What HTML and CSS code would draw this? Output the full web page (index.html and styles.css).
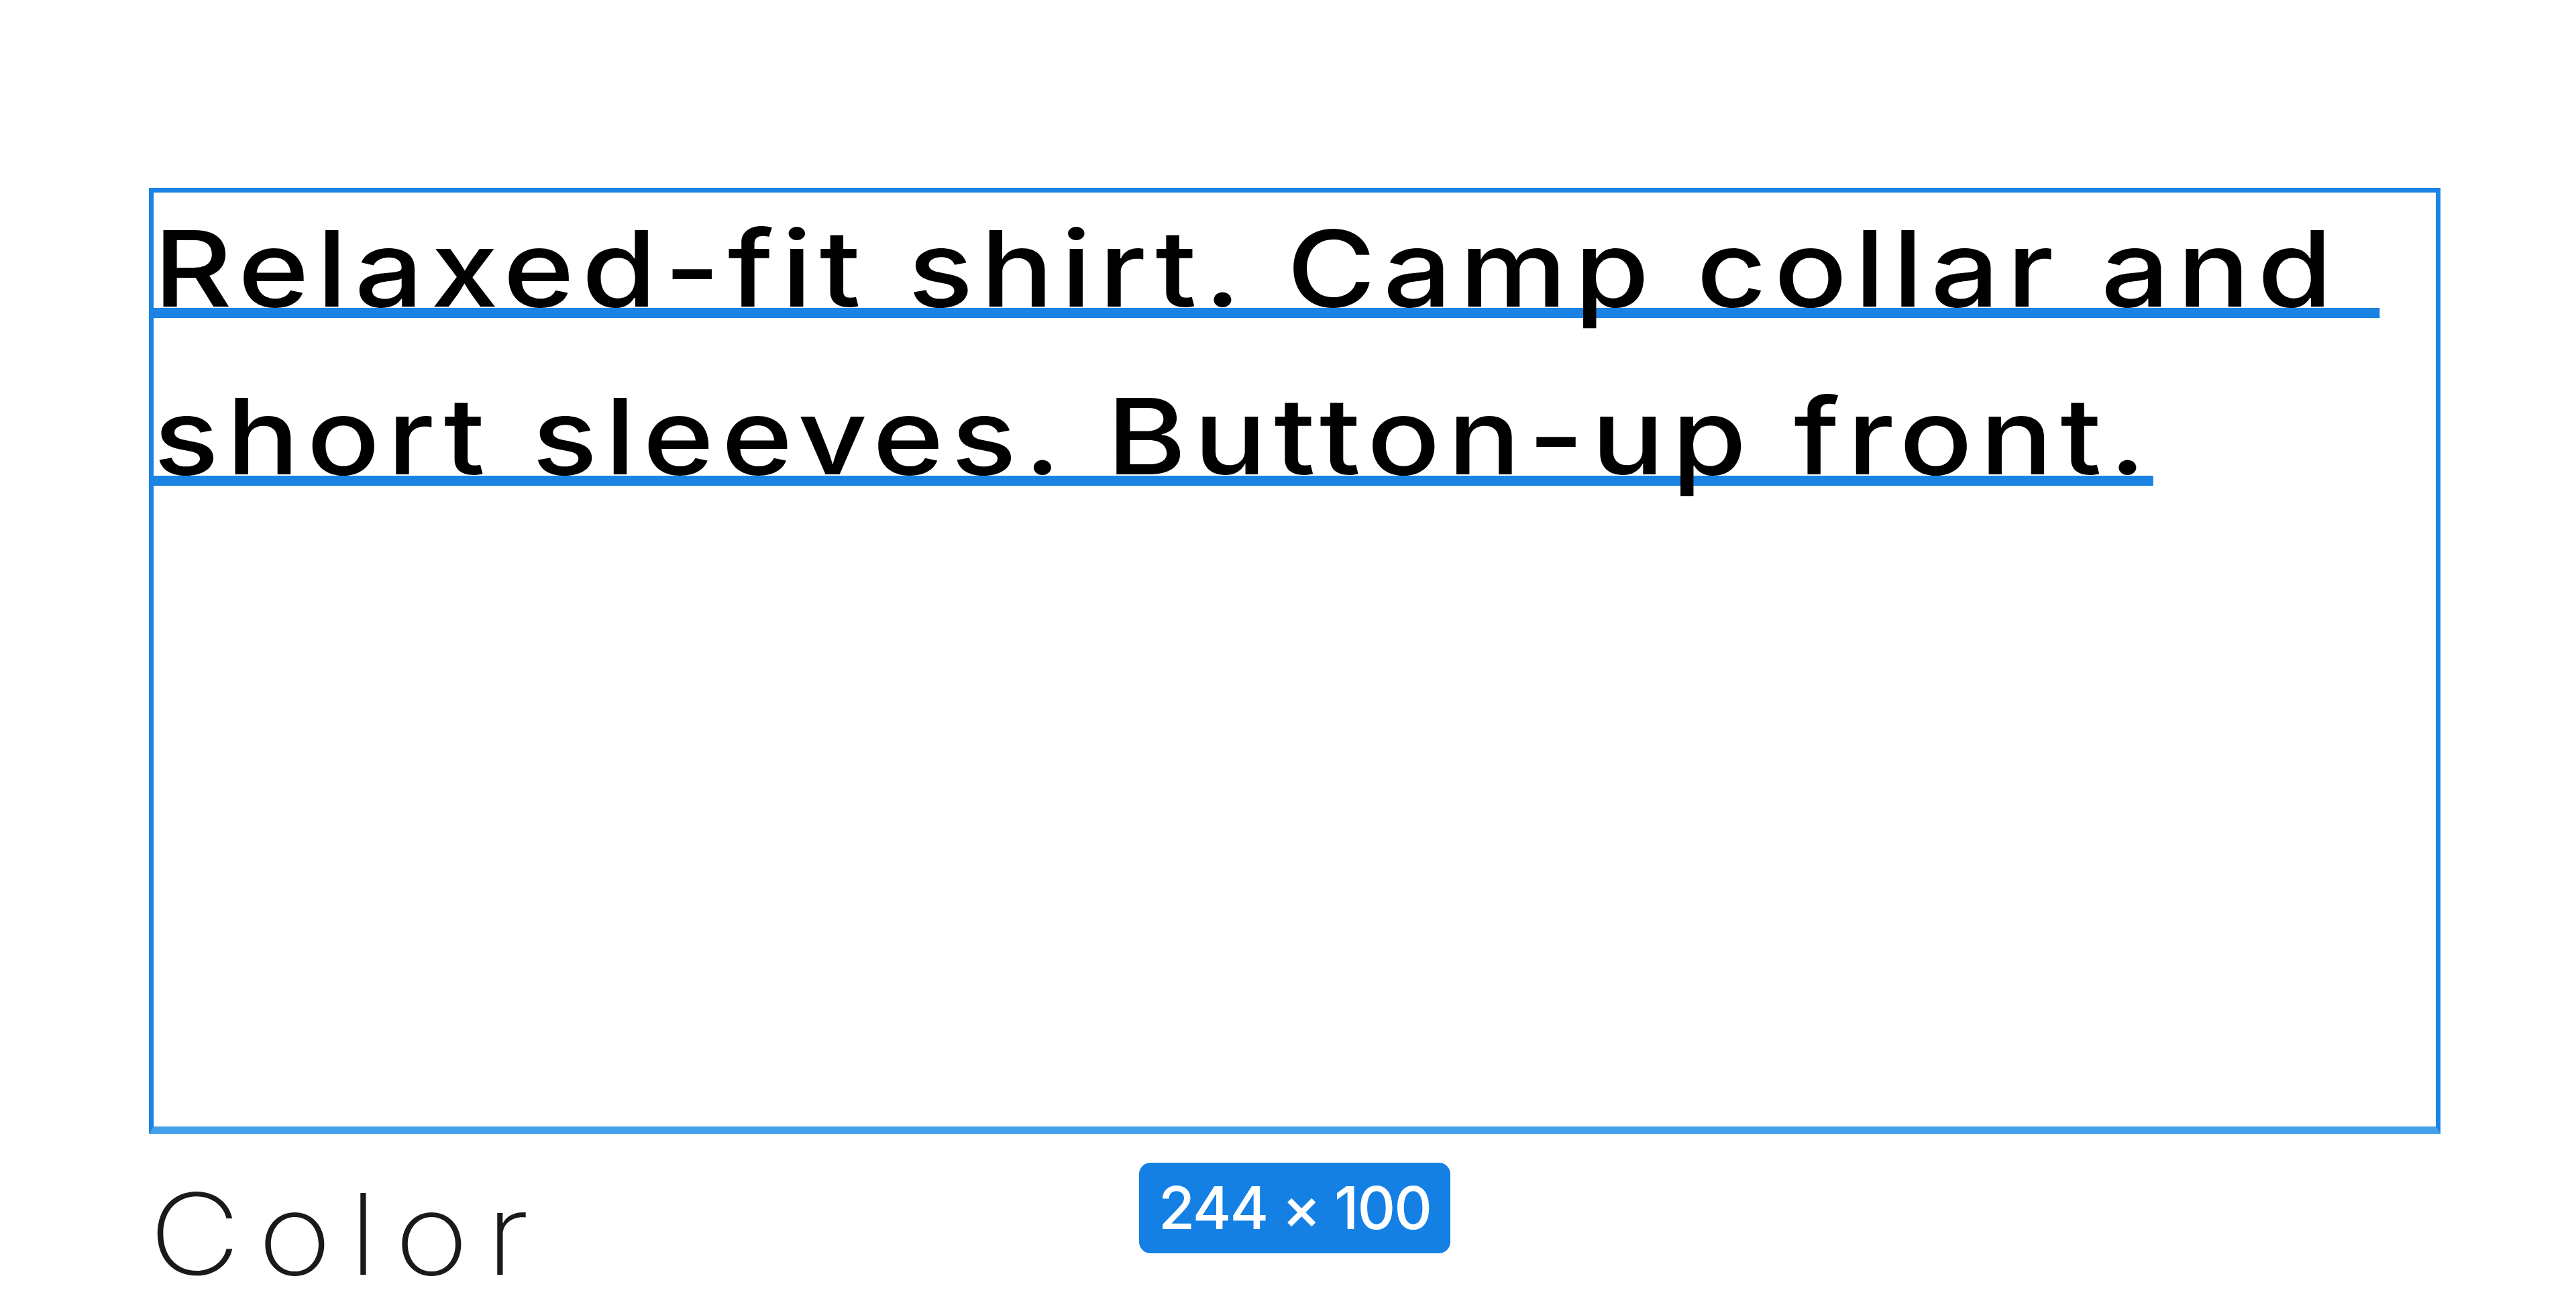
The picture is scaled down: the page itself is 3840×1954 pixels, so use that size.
FILE: index.html
```
<!DOCTYPE html>
<html lang="en">
<head>
    <meta charset="UTF-8">
    <meta name="viewport" content="width=device-width, initial-scale=1.0">
    <title>Product description</title>
    <link rel="stylesheet" href="styles.css">
</head>
<body>
    <div class="canvas">
        <div class="frame">
            <p class="copy">
                <span class="line">Relaxed-fit shirt. Camp collar and&nbsp;</span>
                <span class="line">short sleeves. Button-up front.</span>
            </p>
            <span class="size">244 × 100</span>
        </div>
        <h3 class="label">Color</h3>
    </div>
</body>
</html>
```

FILE: styles.css
```
body{
    margin: 0;
    background: #fff;
    font-family: Inter, "Noto Sans", sans-serif;
}
.canvas{
    padding: 280px 0 0 222px;
}
.frame{
    position: relative;
    box-sizing: border-box;
    width: 3416px;
    height: 1410px;
    border: 7px solid #1b83e4;
    border-bottom: 11px solid #45a0ec;
}
/* the copy face is a wide grotesque, so stretch Inter a little */
.copy{
    width: max-content;
    margin: -12px 0 0;
    font-size: 157px;
    line-height: 250px;
    font-weight: 500;
    letter-spacing: 9.7px;
    color: #000;
    transform: scaleX(1.15);
    transform-origin: left top;
}
.line{
    display: block;
    white-space: nowrap;
    text-decoration: underline #1b83e4;
    text-decoration-thickness: 15px;
    text-underline-offset: 2px;
    text-decoration-skip-ink: none;
}
/* dimension tag under the selected box */
.size{
    position: absolute;
    top: calc(100% + 54px);
    left: 50%;
    transform: translateX(-50%);
    width: 464px;
    height: 135px;
    line-height: 135px;
    text-align: center;
    border-radius: 17px;
    background: #1580e4;
    color: #fff;
    font-size: 88px;
    font-weight: 500;
    letter-spacing: -2px;
}
.label{
    width: max-content;
    margin: 65px 0 0;
    font-size: 168px;
    line-height: 168px;
    font-weight: 200;
    letter-spacing: 23px;
    color: #1a1a1a;
    transform: scaleX(1.12);
    transform-origin: left top;
}
```
